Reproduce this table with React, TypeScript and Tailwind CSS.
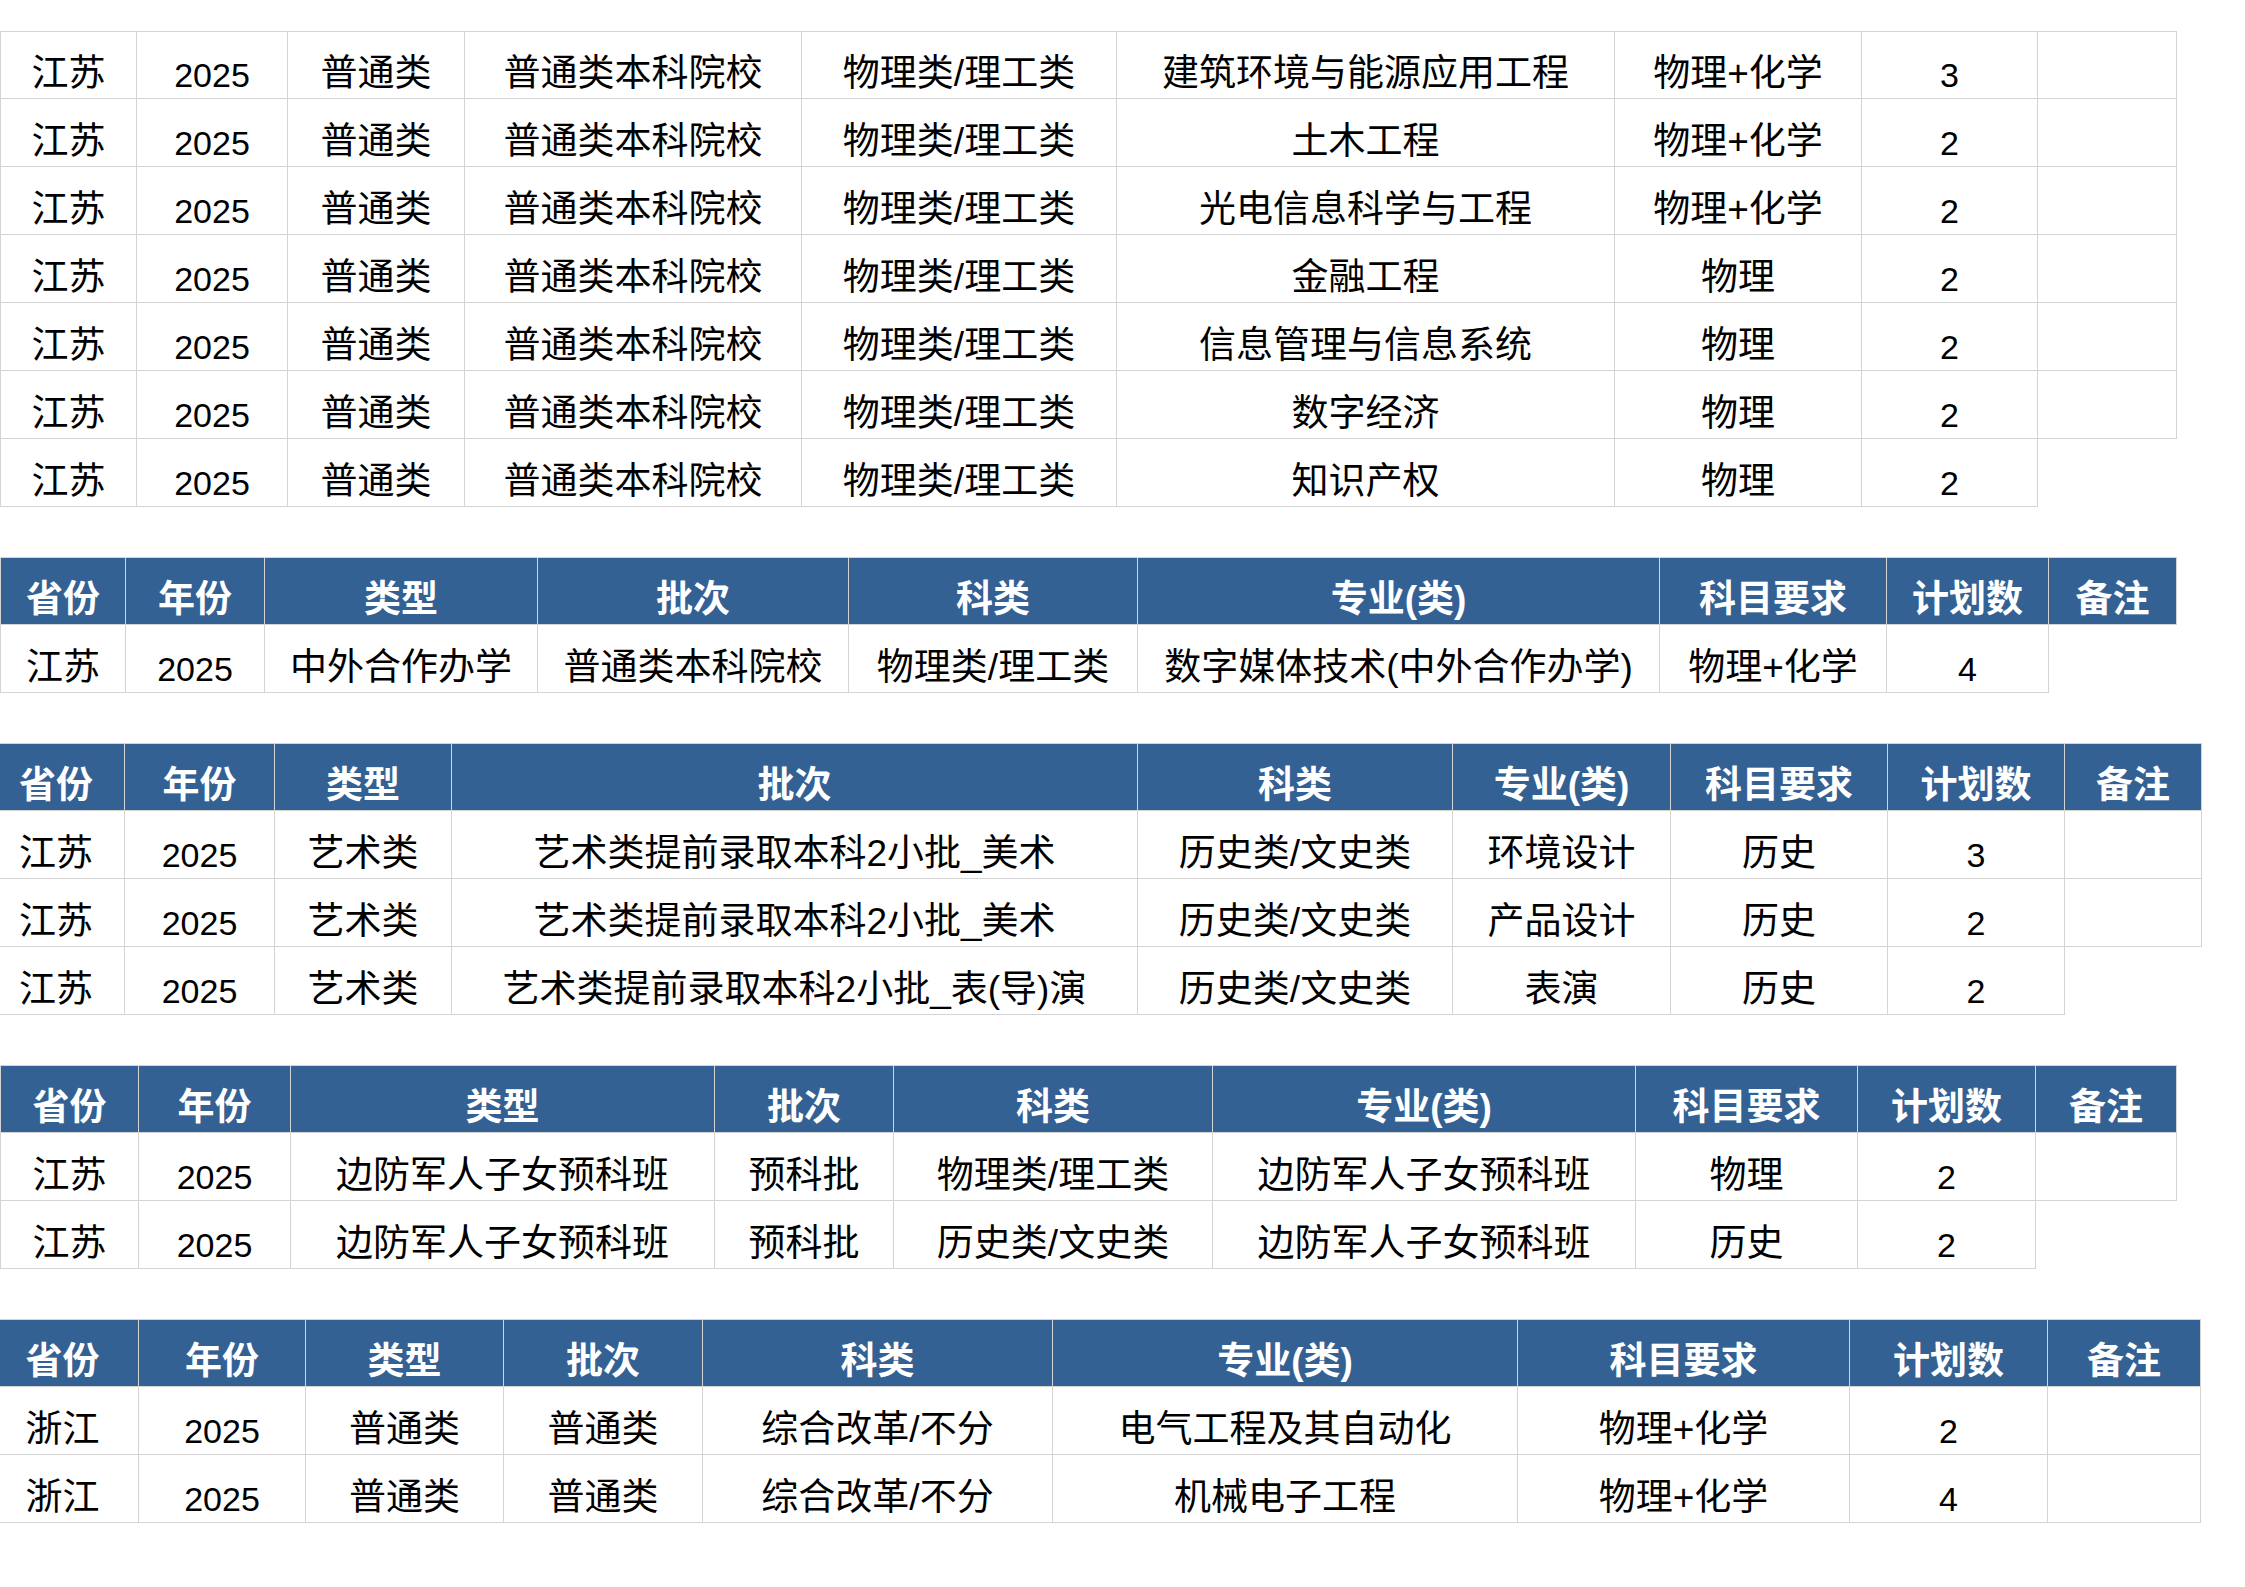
import React from "react";

type Sheet = {
  widths: string[];
  header?: string[];
  rows: string[][];
  shift?: string;
};

const HEAD = ["省份", "年份", "类型", "批次", "科类", "专业(类)", "科目要求", "计划数", "备注"];

// each row lists its cells; a row with 8 cells has no 备注 cell drawn
const sheets: Sheet[] = [
  {
    widths: ["w-[137px]", "w-[151px]", "w-[177px]", "w-[337px]", "w-[315px]", "w-[498px]", "w-[247px]", "w-[176px]", "w-[139px]"],
    rows: [
      ["江苏", "2025", "普通类", "普通类本科院校", "物理类/理工类", "建筑环境与能源应用工程", "物理+化学", "3", ""],
      ["江苏", "2025", "普通类", "普通类本科院校", "物理类/理工类", "土木工程", "物理+化学", "2", ""],
      ["江苏", "2025", "普通类", "普通类本科院校", "物理类/理工类", "光电信息科学与工程", "物理+化学", "2", ""],
      ["江苏", "2025", "普通类", "普通类本科院校", "物理类/理工类", "金融工程", "物理", "2", ""],
      ["江苏", "2025", "普通类", "普通类本科院校", "物理类/理工类", "信息管理与信息系统", "物理", "2", ""],
      ["江苏", "2025", "普通类", "普通类本科院校", "物理类/理工类", "数字经济", "物理", "2", ""],
      ["江苏", "2025", "普通类", "普通类本科院校", "物理类/理工类", "知识产权", "物理", "2"],
    ],
  },
  {
    widths: ["w-[126px]", "w-[139px]", "w-[273px]", "w-[311px]", "w-[289px]", "w-[522px]", "w-[227px]", "w-[162px]", "w-[128px]"],
    header: HEAD,
    rows: [["江苏", "2025", "中外合作办学", "普通类本科院校", "物理类/理工类", "数字媒体技术(中外合作办学)", "物理+化学", "4"]],
  },
  {
    widths: ["w-[138px]", "w-[150px]", "w-[177px]", "w-[686px]", "w-[315px]", "w-[218px]", "w-[217px]", "w-[177px]", "w-[137px]"],
    header: HEAD,
    shift: "-ml-[13px]",
    rows: [
      ["江苏", "2025", "艺术类", "艺术类提前录取本科2小批_美术", "历史类/文史类", "环境设计", "历史", "3", ""],
      ["江苏", "2025", "艺术类", "艺术类提前录取本科2小批_美术", "历史类/文史类", "产品设计", "历史", "2", ""],
      ["江苏", "2025", "艺术类", "艺术类提前录取本科2小批_表(导)演", "历史类/文史类", "表演", "历史", "2"],
    ],
  },
  {
    widths: ["w-[139px]", "w-[152px]", "w-[424px]", "w-[179px]", "w-[319px]", "w-[423px]", "w-[222px]", "w-[178px]", "w-[141px]"],
    header: HEAD,
    rows: [
      ["江苏", "2025", "边防军人子女预科班", "预科批", "物理类/理工类", "边防军人子女预科班", "物理", "2", ""],
      ["江苏", "2025", "边防军人子女预科班", "预科批", "历史类/文史类", "边防军人子女预科班", "历史", "2"],
    ],
  },
  {
    widths: ["w-[153px]", "w-[167px]", "w-[198px]", "w-[199px]", "w-[350px]", "w-[465px]", "w-[332px]", "w-[198px]", "w-[153px]"],
    header: HEAD,
    shift: "-ml-[14px]",
    rows: [
      ["浙江", "2025", "普通类", "普通类", "综合改革/不分", "电气工程及其自动化", "物理+化学", "2", ""],
      ["浙江", "2025", "普通类", "普通类", "综合改革/不分", "机械电子工程", "物理+化学", "4", ""],
    ],
  },
];

function Cell({ text, width, first, top, head }: { text: string; width: string; first: boolean; top: boolean; head?: boolean }) {
  const numeric = /^\d+$/.test(text);
  return (
    <div
      className={clsx(
        width,
        "flex h-[68px] shrink-0 items-end justify-center whitespace-nowrap border-r border-b border-[#d4d4d4] pb-[6px] leading-none",
        first && "border-l",
        top && "border-t",
        head ? "bg-[#346194] font-bold text-white" : "bg-white text-black",
        numeric ? "text-[34px]" : "text-[37px]"
      )}
    >
      {text}
    </div>
  );
}

function clsx(...parts: (string | false | undefined)[]) {
  return parts.filter(Boolean).join(" ");
}

function SheetBlock({ sheet }: { sheet: Sheet }) {
  return (
    <div className={clsx("flex flex-col", sheet.shift)}>
      {sheet.header && (
        <div className="flex">
          {sheet.header.map((h, i) => (
            <Cell key={h} text={h} width={sheet.widths[i]} first={i === 0} top head />
          ))}
        </div>
      )}
      {sheet.rows.map((r, ri) => (
        <div key={ri} className="flex">
          {r.map((c, i) => (
            <Cell key={i} text={c} width={sheet.widths[i]} first={i === 0} top={!sheet.header && ri === 0} />
          ))}
        </div>
      ))}
    </div>
  );
}

export default function App() {
  return (
    <main className="min-h-screen w-full overflow-hidden bg-white pt-[31px] font-['Liberation_Sans','Noto_Sans_CJK_SC',sans-serif]">
      <div className="flex flex-col gap-[50px]">
        {sheets.map((s, i) => (
          <SheetBlock key={i} sheet={s} />
        ))}
      </div>
    </main>
  );
}
